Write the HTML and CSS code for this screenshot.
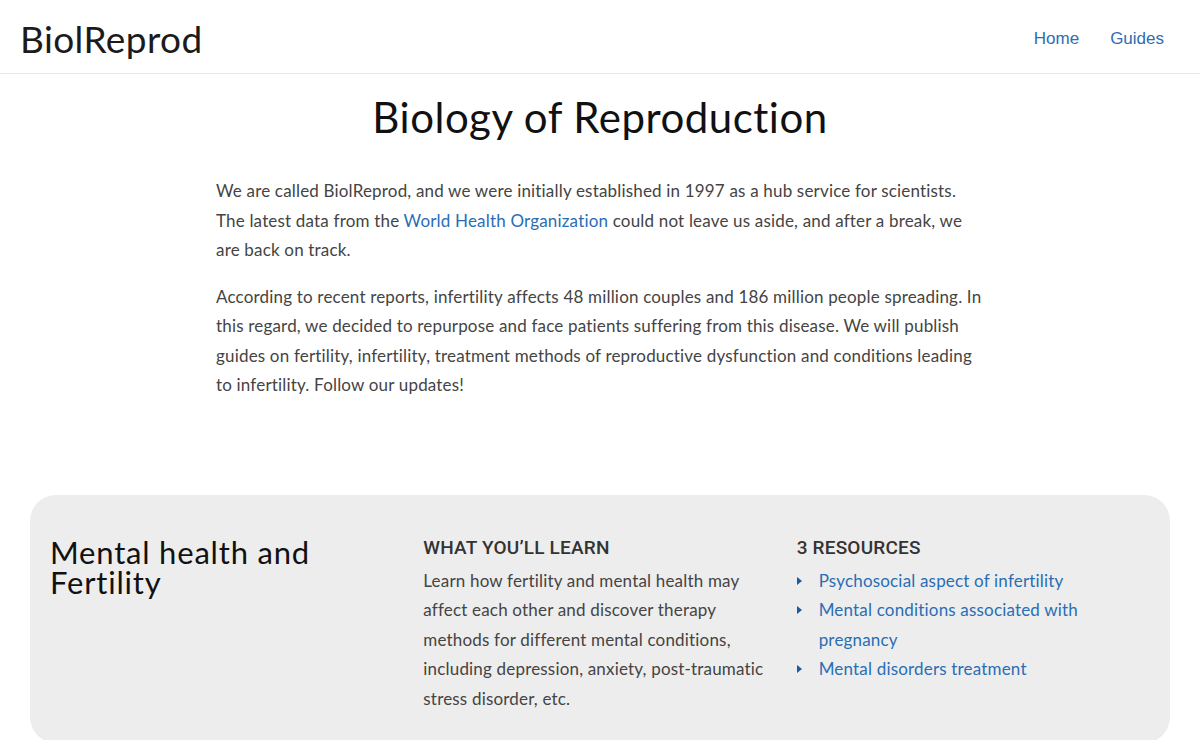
FILE: index.html
```html
<!DOCTYPE html>
<html lang="en">
<head>
    <meta charset="UTF-8">
    <meta name="viewport" content="width=device-width, initial-scale=1.0">
    <title>BiolReprod</title>
    <link rel="stylesheet" href="styles.css">
</head>
<body>
    <header id="site-header">
        <a class="logo" href="#">BiolReprod</a>
        <nav class="main-nav">
            <a href="#">Home</a>
            <a href="#">Guides</a>
        </nav>
    </header>

    <main>
        <section class="intro">
            <h1>Biology of Reproduction</h1>
            <p>We are called BiolReprod, and we were initially established in 1997 as a hub service for scientists. The latest data from the <a href="#">World Health Organization</a> could not leave us aside, and after a break, we are back on track.</p>
            <p>According to recent reports, infertility affects 48 million couples and 186 million people spreading. In this regard, we decided to repurpose and face patients suffering from this disease. We will publish guides on fertility, infertility, treatment methods of reproductive dysfunction and conditions leading to infertility. Follow our updates!</p>
        </section>

        <!-- guide card -->
        <section class="guide-card">
            <div class="guide-col">
                <h2>Mental health and Fertility</h2>
            </div>
            <div class="guide-col">
                <h3>WHAT YOU’LL LEARN</h3>
                <p>Learn how fertility and mental health may affect each other and discover therapy methods for different mental conditions, including depression, anxiety, post-traumatic stress disorder, etc.</p>
            </div>
            <div class="guide-col">
                <h3>3 RESOURCES</h3>
                <ul class="resources">
                    <li><a href="#">Psychosocial aspect of infertility</a></li>
                    <li><a href="#">Mental conditions associated with pregnancy</a></li>
                    <li><a href="#">Mental disorders treatment</a></li>
                </ul>
            </div>
        </section>
    </main>
</body>
</html>
```

FILE: styles.css
```css
body {
    margin: 0;
    font-family: 'Lato', sans-serif;
    color: #444444;
    background-color: #ffffff;
}

a {
    color: #2a6db5;
    text-decoration: none;
}

#site-header {
    display: flex;
    justify-content: space-between;
    align-items: center;
    height: 74px;
    padding: 0 36px 0 20px;
    border-bottom: 1px solid #e6e6e6;
    box-sizing: border-box;
}

.logo {
    font-size: 37px;
    letter-spacing: 0.4px;
    color: #1b1b1b;
    padding-top: 4px;
}

.main-nav {
    display: flex;
    gap: 31px;
    padding-top: 4px;
}

.main-nav a {
    font-family: 'Liberation Sans', Arial, sans-serif;
    font-size: 17px;
    color: #2f6db0;
}

.intro {
    max-width: 768px;
    margin: 0 auto;
    padding-bottom: 78px;
}

.intro h1 {
    margin: 18px 0 34px;
    text-align: center;
    font-size: 42px;
    font-weight: 400;
    letter-spacing: 0.5px;
    color: #111111;
}

.intro p {
    margin: 0 0 17px;
    font-size: 17px;
    line-height: 29.5px;
    letter-spacing: 0.18px;
}

.guide-card {
    display: grid;
    grid-template-columns: repeat(3, 1fr);
    margin: 0 30px;
    padding: 41px 20px 30px 0;
    background-color: #ededed;
    border-radius: 26px;
}

.guide-col {
    padding-left: 20px;
}

.guide-col h2 {
    margin: 1px 0 0;
    font-size: 31px;
    font-weight: 400;
    line-height: 30px;
    letter-spacing: 0.8px;
    color: #111111;
}

.guide-col h3 {
    margin: 0 0 7px;
    font-family: 'Roboto', sans-serif;
    font-size: 19px;
    font-weight: 500;
    letter-spacing: 0.2px;
    color: #333333;
}

.guide-col p {
    margin: 0;
    font-size: 17px;
    line-height: 29.5px;
    letter-spacing: 0.18px;
}

.resources {
    margin: 0;
    padding: 0;
    list-style: none;
}

.resources li {
    position: relative;
    padding-left: 22px;
    font-size: 17px;
    line-height: 29.5px;
    letter-spacing: 0.18px;
}

.resources li::before {
    content: '';
    position: absolute;
    left: 0;
    top: 11px;
    border-left: 5px solid #1d5a9e;
    border-top: 4px solid transparent;
    border-bottom: 4px solid transparent;
}
```
